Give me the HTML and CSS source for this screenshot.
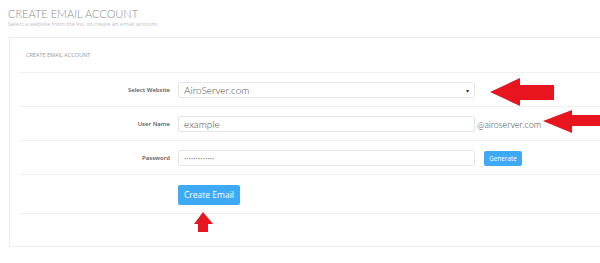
FILE: index.html
```html
<!DOCTYPE html>
<html lang="en">
<head>
    <meta charset="UTF-8">
    <meta name="viewport" content="width=device-width, initial-scale=1.0">
    <title>Create Email Account</title>
    <link rel="stylesheet" href="styles.css">
</head>
<body>
    <div class="page">
        <div class="page-header">
            <h1>CREATE EMAIL ACCOUNT</h1>
            <p class="subtitle">Select a website from the list, to create an email account</p>
        </div>

        <div class="card">
            <div class="card-title">CREATE EMAIL ACCOUNT</div>

            <div class="form-row">
                <label class="form-label" for="website">Select Website</label>
                <div class="select-box" id="website">
                    <span>AiroServer.com</span>
                    <span class="caret">&#9662;</span>
                </div>
            </div>

            <div class="form-row">
                <label class="form-label" for="username">User Name</label>
                <div class="text-input" id="username">example</div>
                <span class="domain">@airoserver.com</span>
            </div>

            <div class="form-row">
                <label class="form-label" for="password">Password</label>
                <div class="text-input password" id="password">&bull;&bull;&bull;&bull;&bull;&bull;&bull;&bull;&bull;&bull;&bull;&bull;&bull;</div>
                <button class="btn btn-small">Generate</button>
            </div>

            <div class="form-row form-row-actions">
                <button class="btn btn-main">Create Email</button>
            </div>
        </div>

        <!-- red callout arrows drawn over the form -->
        <svg class="arrow arrow-website" width="64" height="30" viewBox="0 0 64 30">
            <polygon points="0,15 30,1 30,8 64,8 64,23 30,23 30,29" />
        </svg>
        <svg class="arrow arrow-domain" width="58" height="24" viewBox="0 0 58 24">
            <polygon points="0,11 29,0 29,5 58,5 58,16 29,16 29,23" />
        </svg>
        <svg class="arrow arrow-button" width="20" height="21" viewBox="0 0 20 21">
            <polygon points="9,0 19,12 14,12 14,20 4,20 4,12 0,12" />
        </svg>
    </div>
</body>
</html>
```

FILE: styles.css
```css
* {
    margin: 0;
    padding: 0;
    box-sizing: border-box;
}

body {
    background-color: #ffffff;
    font-family: 'Open Sans', 'Liberation Sans', sans-serif;
    color: #555555;
    overflow: hidden;
}

.page {
    position: relative;
    width: 600px;
    height: 263px;
    overflow: hidden;
}

.page-header {
    padding: 7px 8px 0;
    height: 37px;
}

h1 {
    font-family: 'Lato', 'Open Sans', sans-serif;
    font-weight: 300;
    font-size: 11px;
    line-height: 13px;
    color: #8a8a8a;
}

.subtitle {
    font-size: 5.7px;
    line-height: 8px;
    color: #c0c0c0;
}

.card {
    margin-left: 9px;
    width: 610px;
    height: 210px;
    border: 1px solid #ececec;
    border-right: none;
    background-color: #ffffff;
    padding: 0 0 0 9px;
}

.card-title {
    height: 35px;
    padding: 13px 0 0 7px;
    font-size: 5.5px;
    color: #9a9a9a;
    border-bottom: 1px solid #f1f1f1;
}

.form-row {
    display: flex;
    align-items: center;
    height: 34px;
    padding-top: 1px;
    border-bottom: 1px solid #f1f1f1;
}

.form-label {
    width: 151px;
    text-align: right;
    font-size: 6px;
    font-weight: 600;
    color: #555555;
    margin-right: 8px;
}

.select-box,
.text-input {
    width: 297px;
    height: 16px;
    border: 1px solid #e6e6e6;
    border-radius: 2px;
    padding: 0 5px;
    display: flex;
    align-items: center;
    font-family: 'Lato', 'Open Sans', sans-serif;
    font-weight: 300;
    font-size: 10px;
    color: #4a4a4a;
}

.select-box {
    justify-content: space-between;
}

.caret {
    font-size: 6px;
    color: #333333;
}

.password {
    font-size: 4px;
    color: #777777;
}

.domain {
    margin-left: 2px;
    font-family: 'Lato', 'Open Sans', sans-serif;
    font-weight: 300;
    font-size: 9px;
    color: #444444;
}

.btn {
    border: none;
    border-radius: 2px;
    background-color: #3ea9f5;
    color: #ffffff;
    font-family: 'Open Sans', sans-serif;
    cursor: pointer;
}

.btn-small {
    margin-left: 9px;
    width: 38px;
    height: 15px;
    font-size: 6.3px;
}

.form-row-actions {
    height: 39px;
    padding-left: 159px;
}

.btn-main {
    width: 62px;
    height: 20px;
    font-size: 8.5px;
}

.arrow {
    position: absolute;
    fill: #e8151f;
}

.arrow-website {
    left: 490px;
    top: 77px;
}

.arrow-domain {
    left: 543px;
    top: 110px;
}

.arrow-button {
    left: 194px;
    top: 212px;
}
```
